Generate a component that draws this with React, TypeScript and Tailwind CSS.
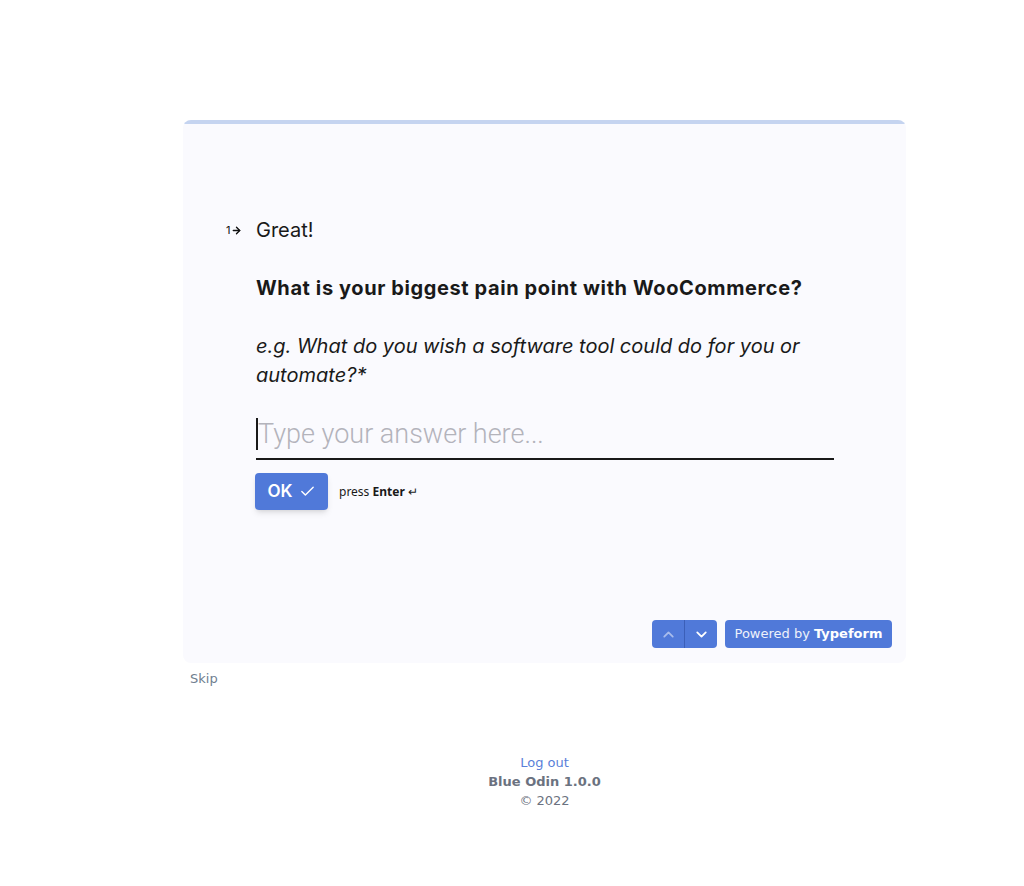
import React from 'react';
import { ArrowRight, Check, ChevronUp, ChevronDown } from 'lucide-react';

const formFont = { fontFamily: 'Inter, "Noto Sans", sans-serif' };

const App: React.FC = () => {
  return (
    <div className="min-h-[886px] bg-white" style={{ fontFamily: '"DejaVu Sans", sans-serif' }}>
      <div className="ml-[183px] w-[723px] pt-[120px]">
        {/* Typeform card */}
        <div className="bg-[#fafafe] rounded-lg overflow-hidden h-[543px] flex flex-col" style={formFont}>
          <div className="h-[4px] bg-[#c5d4f0]" />
          <div className="flex-1 flex flex-col">
            <div className="pt-[92px] pl-[43px] flex">
              <div className="w-[30px] flex items-center gap-[1px] text-[#111] text-[11px] h-[28px]">
                <span>1</span>
                <ArrowRight size={11} strokeWidth={3} />
              </div>
              <div className="w-[578px]">
                <div className="text-[20px] leading-[28px] text-[#191919]">Great!</div>
                <div className="mt-[30px] text-[20px] leading-[28px] font-bold tracking-[0.6px] text-[#191919]">
                  What is your biggest pain point with WooCommerce?
                </div>
                <div className="mt-[30px] text-[20px] leading-[29px] italic text-[#191919] pr-[20px]">
                  e.g. What do you wish a software tool could do for you or automate?*
                </div>
                <div className="mt-[26px] border-b-2 border-[#191919] pb-[6px] flex items-center">
                  <div className="w-[2px] h-[32px] bg-[#191919]" />
                  <span
                    className="text-[27px] leading-[36px] font-light text-[#b3b3bb]"
                    style={{ fontFamily: 'Roboto, sans-serif' }}
                  >
                    Type your answer here...
                  </span>
                </div>
                <div className="mt-[13px] flex items-center">
                  <button className="w-[73px] h-[37px] -ml-[1px] rounded bg-[#5079d9] text-white font-semibold text-[17px] flex items-center justify-center gap-[6px] shadow-md">
                    OK
                    <Check size={17} strokeWidth={2} />
                  </button>
                  <span className="ml-[11px] text-[12px] text-[#191919]" style={{ fontFamily: '"Noto Sans", sans-serif' }}>
                    press <b>Enter</b> ↵
                  </span>
                </div>
              </div>
            </div>
            <div className="mt-auto pb-[15px] pr-[14px] flex justify-end gap-[8px]">
              <div className="flex rounded overflow-hidden h-[28px]">
                <button className="w-[32px] bg-[#5079d9] flex items-center justify-center text-white/50">
                  <ChevronUp size={17} strokeWidth={2.5} />
                </button>
                <div className="w-[1px] bg-[#3b5fb8]" />
                <button className="w-[32px] bg-[#5079d9] flex items-center justify-center text-white">
                  <ChevronDown size={17} strokeWidth={2.5} />
                </button>
              </div>
              <button
                className="h-[28px] w-[167px] rounded bg-[#5079d9] text-white text-[13px]"
                style={{ fontFamily: '"DejaVu Sans", sans-serif' }}
              >
                <span className="opacity-90">Powered by </span>
                <b>Typeform</b>
              </button>
            </div>
          </div>
        </div>

        <div className="pt-[6px] pl-[7px] text-[13px] text-[#708090]">Skip</div>

        <div className="mt-[64px] flex flex-col items-center text-[13px] leading-[19px]">
          <a className="text-[#5a7fd9]">Log out</a>
          <div className="font-bold text-[#6b7280]">Blue Odin 1.0.0</div>
          <div className="text-[#6b7280]">© 2022</div>
        </div>
      </div>
    </div>
  );
};

export default App;
